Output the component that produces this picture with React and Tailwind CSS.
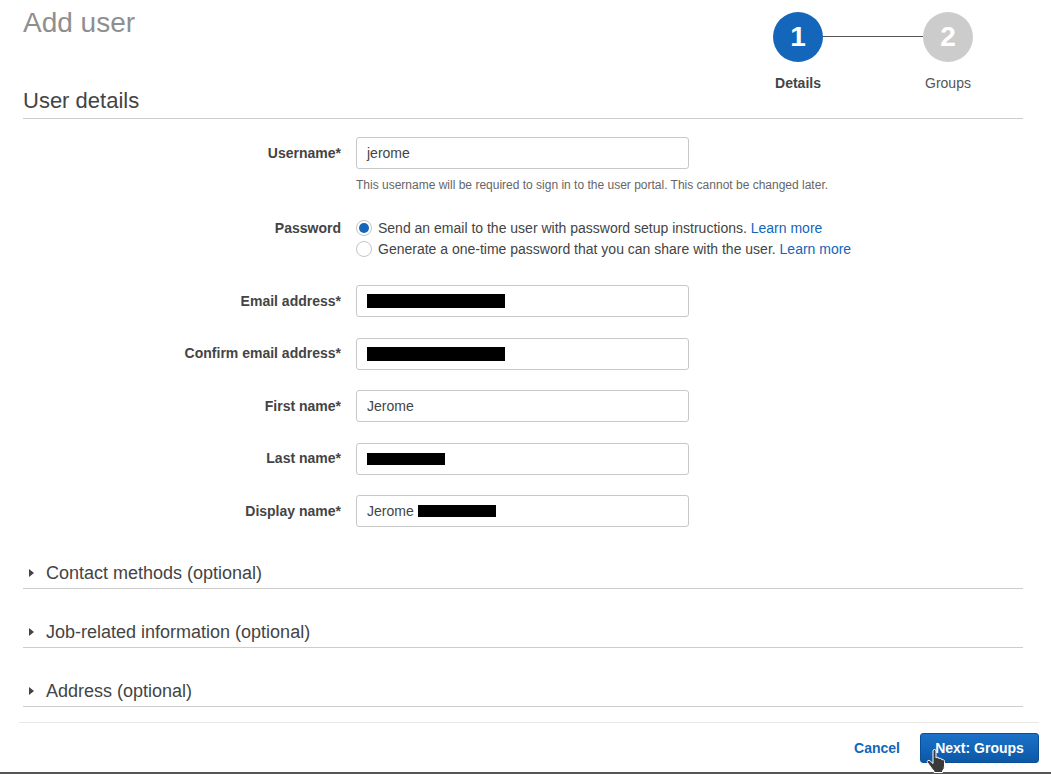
import React from "react";

function Step({ n, label, active }) {
  return (
    <div className="flex w-[50px] flex-col items-center">
      <div
        className={
          active
            ? "flex h-[50px] w-[50px] items-center justify-center rounded-full bg-[#1366b9] text-[28px] font-bold text-white"
            : "flex h-[50px] w-[50px] items-center justify-center rounded-full bg-[#cccccc] text-[28px] font-bold text-white"
        }
      >
        {n}
      </div>
      <div
        className={
          active
            ? "mt-[13px] whitespace-nowrap text-[14px] leading-[16px] font-bold text-[#444]"
            : "mt-[13px] whitespace-nowrap text-[14px] leading-[16px] text-[#555]"
        }
      >
        {label}
      </div>
    </div>
  );
}

function Label({ children }) {
  return (
    <div className="flex h-[32px] w-[318px] shrink-0 items-center justify-end text-[14px] font-bold text-[#444]">
      {children}
    </div>
  );
}

function Input({ children }) {
  return (
    <div className="flex h-[32px] w-[333px] items-center rounded-[3px] border border-[#c8c8c8] bg-white pl-[10px] text-[14px] text-[#444]">
      {children}
    </div>
  );
}

function Redact({ w, h }) {
  return <span className={`inline-block bg-black ${w} ${h}`} />;
}

function Radio({ checked }) {
  return (
    <span className="flex h-[16px] w-[16px] shrink-0 items-center justify-center rounded-full border border-[#c4c4c4] bg-white">
      {checked && <span className="h-[10px] w-[10px] rounded-full bg-[#1366b9]" />}
    </span>
  );
}

function Section({ title, first }) {
  return (
    <div
      className={
        (first ? "mt-[35px] " : "mt-[32px] ") +
        "flex items-center border-b border-[#cccccc] pb-[4px] text-[18px] leading-[22px] text-[#444]"
      }
    >
      <svg width="5" height="8" viewBox="0 0 5 8" className="ml-[6px] mr-[12px]">
        <path d="M0 0 L5 4 L0 8 Z" fill="#444" />
      </svg>
      <span>{title}</span>
    </div>
  );
}

export default function App() {
  return (
    <div className="relative flex h-[774px] w-[1051px] flex-col overflow-hidden bg-white font-['Liberation_Sans',Arial,sans-serif]">
      <div className="w-[1023px] pl-[23px]">
        {/* Header */}
        <div className="flex items-start justify-between border-b border-[#cccccc]">
          <div>
            <h1 className="mt-[7px] text-[28px] leading-[32px] text-[#8f8f8f]">Add user</h1>
            <h2 className="mt-[49px] pb-[4px] text-[22px] leading-[26px] text-[#444]">User details</h2>
          </div>
          <div className="mr-[50px] flex items-start pt-[12px]">
            <Step n="1" label="Details" active />
            <div className="mt-[24px] h-px w-[100px] bg-[#555]" />
            <Step n="2" label="Groups" />
          </div>
        </div>

        {/* Form */}
        <div className="mt-[18px] flex gap-[15px]">
          <Label>Username*</Label>
          <div>
            <Input>jerome</Input>
            <div className="mt-[8px] text-[12px] leading-[16px] text-[#666]">
              This username will be required to sign in to the user portal. This cannot be changed later.
            </div>
          </div>
        </div>

        <div className="mt-[24.5px] flex gap-[15px]">
          <div className="w-[318px] shrink-0 text-right text-[14px] leading-[21px] font-bold text-[#444]">
            Password
          </div>
          <div className="text-[14px] leading-[21px] text-[#444]">
            <div className="flex items-center gap-[6px]">
              <Radio checked />
              <span>
                Send an email to the user with password setup instructions.{" "}
                <span className="text-[#1166bb]">Learn more</span>
              </span>
            </div>
            <div className="flex items-center gap-[6px]">
              <Radio />
              <span>
                Generate a one-time password that you can share with the user.{" "}
                <span className="text-[#1166bb]">Learn more</span>
              </span>
            </div>
          </div>
        </div>

        <div className="mt-[25.5px] flex gap-[15px]">
          <Label>Email address*</Label>
          <Input>
            <Redact w="w-[138px]" h="h-[14px]" />
          </Input>
        </div>
        <div className="mt-[20.5px] flex gap-[15px]">
          <Label>Confirm email address*</Label>
          <Input>
            <Redact w="w-[138px]" h="h-[14px]" />
          </Input>
        </div>
        <div className="mt-[20.5px] flex gap-[15px]">
          <Label>First name*</Label>
          <Input>Jerome</Input>
        </div>
        <div className="mt-[20.5px] flex gap-[15px]">
          <Label>Last name*</Label>
          <Input>
            <Redact w="w-[78px]" h="h-[12px]" />
          </Input>
        </div>
        <div className="mt-[20.5px] flex gap-[15px]">
          <Label>Display name*</Label>
          <Input>
            <span>Jerome</span>
            <span className="ml-[4px] inline-block h-[12px] w-[78px] bg-black" />
          </Input>
        </div>

        <Section title="Contact methods (optional)" first />
        <Section title="Job-related information (optional)" />
        <Section title="Address (optional)" />
      </div>

      {/* Footer */}
      <div className="ml-[19px] mt-[15px] flex w-[1020px] items-center justify-end border-t border-[#e8e8e8] pt-[10px]">
        <span className="mr-[20px] text-[14px] font-bold text-[#1166bb]">Cancel</span>
        <div className="flex h-[30px] w-[119px] items-center justify-center rounded-[3px] border border-[#0b4f96] bg-linear-to-b from-[#1b72c8] to-[#0c58a6] text-[14px] font-bold text-white">
          Next: Groups
        </div>
      </div>

      <div className="mt-auto h-[2px] w-full bg-[#555]" />

      {/* mouse cursor */}
      <svg
        width="20"
        height="24"
        viewBox="0 0 20 24"
        className="absolute left-[926px] top-[749px]"
      >
        <path
          d="M7 2 Q7 0.5 8.5 0.5 Q10 0.5 10 2 L10 9 Q10.5 8 12 8.3 Q13 8.6 13 9.8 Q13.5 9 14.8 9.4 Q16 9.8 16 11 Q16.5 10.3 17.6 10.8 Q18.5 11.3 18.5 12.5 L18.5 17 Q18.5 20 16.5 22 L16.5 23.5 L8 23.5 L8 22 Q6 20 4 17 L1.5 13.5 Q0.8 12.3 1.8 11.6 Q3 10.9 4.2 12 L7 14.5 Z"
          fill="#3a3a3a"
          stroke="#ffffff"
          strokeWidth="1"
        />
      </svg>
    </div>
  );
}
